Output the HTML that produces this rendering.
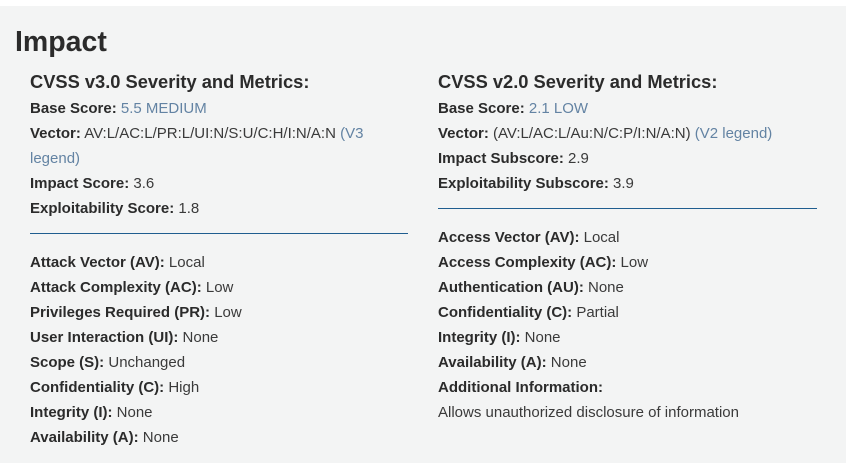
<!DOCTYPE html>
<html><head><meta charset="utf-8"><style>
html,body{margin:0;padding:0;background:#fff;width:848px;height:470px;overflow:hidden}
body{font-family:"Liberation Sans",Arial,sans-serif;color:#333}
#box{position:absolute;left:0;top:6px;width:846px;height:457px;background:#f3f4f4}
.l{position:absolute;height:25px;line-height:25px;font-size:15px;white-space:nowrap;color:#3a3a3a;margin-top:1px}
.l b{color:#2b2b2b}
.a{color:#6383a3}
h1{position:absolute;left:15px;top:24px;margin:0;font-size:28.5px;line-height:36px;font-weight:bold;color:#2b2b2b}
h2{position:absolute;margin:0;font-size:18.3px;line-height:24px;font-weight:bold;color:#2b2b2b}
.r{position:absolute;height:1px;background:#1f5d8f}
</style></head><body>
<div id="box"></div>
<h1>Impact</h1>
<h2 style="left:30px;top:70px">CVSS v3.0 Severity and Metrics:</h2>
<h2 style="left:438px;top:70px">CVSS v2.0 Severity and Metrics:</h2>

<div class="l" style="left:30px;top:95px"><b>Base Score:</b> <span class="a">5.5 MEDIUM</span></div>
<div class="l" style="left:30px;top:120px"><b>Vector:</b> AV:L/AC:L/PR:L/UI:N/S:U/C:H/I:N/A:N <span class="a">(V3</span></div>
<div class="l" style="left:30px;top:145px"><span class="a">legend)</span></div>
<div class="l" style="left:30px;top:170px"><b>Impact Score:</b> 3.6</div>
<div class="l" style="left:30px;top:195px"><b>Exploitability Score:</b> 1.8</div>
<div class="r" style="left:30px;top:233px;width:378px"></div>
<div class="l" style="left:30px;top:249px"><b>Attack Vector (AV):</b> Local</div>
<div class="l" style="left:30px;top:274px"><b>Attack Complexity (AC):</b> Low</div>
<div class="l" style="left:30px;top:299px"><b>Privileges Required (PR):</b> Low</div>
<div class="l" style="left:30px;top:324px"><b>User Interaction (UI):</b> None</div>
<div class="l" style="left:30px;top:349px"><b>Scope (S):</b> Unchanged</div>
<div class="l" style="left:30px;top:374px"><b>Confidentiality (C):</b> High</div>
<div class="l" style="left:30px;top:399px"><b>Integrity (I):</b> None</div>
<div class="l" style="left:30px;top:424px"><b>Availability (A):</b> None</div>

<div class="l" style="left:438px;top:95px"><b>Base Score:</b> <span class="a">2.1 LOW</span></div>
<div class="l" style="left:438px;top:120px"><b>Vector:</b> (AV:L/AC:L/Au:N/C:P/I:N/A:N) <span class="a">(V2 legend)</span></div>
<div class="l" style="left:438px;top:145px"><b>Impact Subscore:</b> 2.9</div>
<div class="l" style="left:438px;top:170px"><b>Exploitability Subscore:</b> 3.9</div>
<div class="r" style="left:438px;top:208px;width:379px"></div>
<div class="l" style="left:438px;top:224px"><b>Access Vector (AV):</b> Local</div>
<div class="l" style="left:438px;top:249px"><b>Access Complexity (AC):</b> Low</div>
<div class="l" style="left:438px;top:274px"><b>Authentication (AU):</b> None</div>
<div class="l" style="left:438px;top:299px"><b>Confidentiality (C):</b> Partial</div>
<div class="l" style="left:438px;top:324px"><b>Integrity (I):</b> None</div>
<div class="l" style="left:438px;top:349px"><b>Availability (A):</b> None</div>
<div class="l" style="left:438px;top:374px"><b>Additional Information:</b></div>
<div class="l" style="left:438px;top:399px">Allows unauthorized disclosure of information</div>
</body></html>
